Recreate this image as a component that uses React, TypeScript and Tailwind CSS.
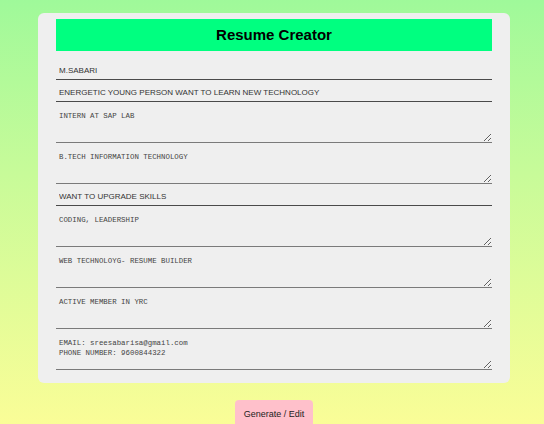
import React from 'react'

const inputCls =
  "block h-[18px] w-full border-b border-[#4a4a4a] bg-transparent px-[3px] font-['Liberation_Sans',Arial,sans-serif] text-[8px] text-[#333] outline-none"

const areaCls =
  "block h-[37px] w-full border-b-[1.5px] border-[#7a7a7a] bg-transparent px-[3px] pt-[5px] font-['Liberation_Mono','DejaVu_Sans_Mono',monospace] text-[7.4px] leading-[10px] text-[#444] outline-none"

export default function App() {
  return (
    <div className="min-h-screen w-full bg-gradient-to-b from-[#9ff99a] to-[#fbfd97] pt-[13px]">
      <div className="ml-[38px] w-[472px] rounded-[6px] bg-[#efefef] px-[18px] pt-[6px] pb-[13px]">
        {/* Header */}
        <div className="flex h-[32px] items-center justify-center bg-[#00ff80]">
          <h1 className="font-['Liberation_Sans',Arial,sans-serif] text-[15px] font-bold text-black">
            Resume Creator
          </h1>
        </div>

        <div className="mt-[11px] flex flex-col gap-[4px]">
          <input className={inputCls} defaultValue="M.SABARI" />
          <input className={inputCls} defaultValue="ENERGETIC YOUNG PERSON WANT TO LEARN NEW TECHNOLOGY" />
          <textarea className={areaCls} defaultValue="INTERN AT SAP LAB" />
          <textarea className={areaCls} defaultValue="B.TECH INFORMATION TECHNOLOGY" />
          <input className={inputCls} defaultValue="WANT TO UPGRADE SKILLS" />
          <textarea className={areaCls} defaultValue="CODING, LEADERSHIP" />
          <textarea className={areaCls} defaultValue="WEB TECHNOLOYG- RESUME BUILDER" />
          <textarea className={areaCls} defaultValue="ACTIVE MEMBER IN YRC" />
          <textarea
            className={areaCls}
            defaultValue={'EMAIL: sreesabarisa@gmail.com\nPHONE NUMBER: 9600844322'}
          />
        </div>
      </div>

      <div className="mt-[17px] flex justify-center pl-[4px]">
        <button className="h-[30px] rounded-[4px] bg-[#ffc0cb] px-[9px] font-['Liberation_Sans',Arial,sans-serif] text-[9px] font-medium text-[#222]">
          Generate / Edit
        </button>
      </div>
    </div>
  )
}
